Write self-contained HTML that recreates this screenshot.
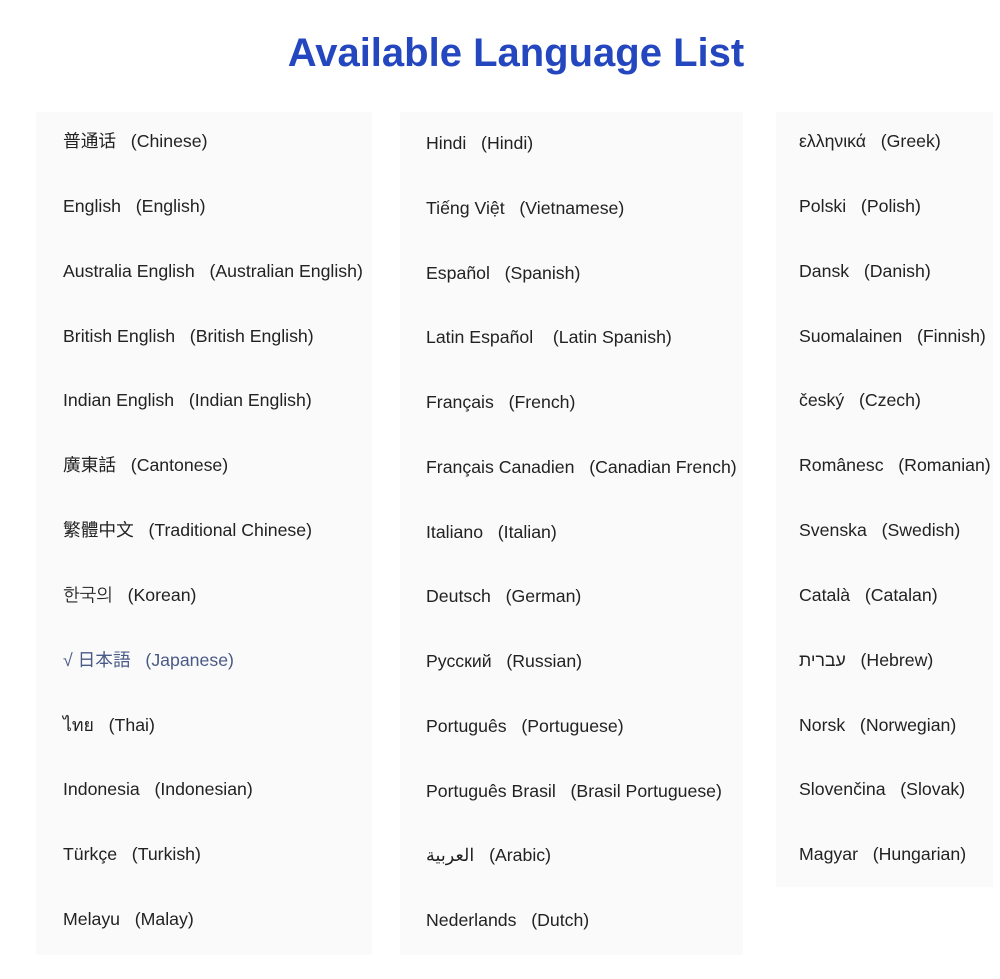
<!DOCTYPE html>
<html><head><meta charset="utf-8"><style>
body{margin:0;width:1000px;height:979px;background:#fff;position:relative;overflow:hidden;font-family:"Liberation Sans","Noto Sans CJK SC",sans-serif;}
h1{position:absolute;top:28px;left:0;width:1032px;text-align:center;margin:0;font-size:40px;font-weight:bold;color:#2447c0;line-height:50px;}
.p{position:absolute;background:#fafafa;}
.r{position:absolute;font-size:17.7px;color:#222;white-space:pre;line-height:22px;}
.sel{color:#4a5a86;}
</style></head><body>
<h1>Available Language List</h1>
<div class="p" style="left:36px;top:112px;width:336px;height:843px"></div>
<div class="p" style="left:400px;top:112px;width:343px;height:843px"></div>
<div class="p" style="left:776px;top:112px;width:217px;height:775px"></div>

<div class="r" style="left:63px;top:130px">普通话   (Chinese)</div>
<div class="r" style="left:63px;top:195px">English   (English)</div>
<div class="r" style="left:63px;top:260px">Australia English   (Australian English)</div>
<div class="r" style="left:63px;top:325px">British English   (British English)</div>
<div class="r" style="left:63px;top:389px">Indian English   (Indian English)</div>
<div class="r" style="left:63px;top:454px">廣東話   (Cantonese)</div>
<div class="r" style="left:63px;top:519px">繁體中文   (Traditional Chinese)</div>
<div class="r" style="left:63px;top:584px;font-family:'Liberation Sans','NanumGothic',sans-serif">한국의   (Korean)</div>
<div class="r sel" style="left:63px;top:649px;font-family:'Liberation Sans','Noto Sans CJK JP',sans-serif">√ 日本語   (Japanese)</div>
<div class="r" style="left:63px;top:714px">ไทย   (Thai)</div>
<div class="r" style="left:63px;top:778px">Indonesia   (Indonesian)</div>
<div class="r" style="left:63px;top:843px">Türkçe   (Turkish)</div>
<div class="r" style="left:63px;top:908px">Melayu   (Malay)</div>

<div class="r" style="left:426px;top:132px">Hindi   (Hindi)</div>
<div class="r" style="left:426px;top:197px">Tiếng Việt   (Vietnamese)</div>
<div class="r" style="left:426px;top:262px">Español   (Spanish)</div>
<div class="r" style="left:426px;top:326px">Latin Español    (Latin Spanish)</div>
<div class="r" style="left:426px;top:391px">Français   (French)</div>
<div class="r" style="left:426px;top:456px">Français Canadien   (Canadian French)</div>
<div class="r" style="left:426px;top:521px">Italiano   (Italian)</div>
<div class="r" style="left:426px;top:585px">Deutsch   (German)</div>
<div class="r" style="left:426px;top:650px">Русский   (Russian)</div>
<div class="r" style="left:426px;top:715px">Português   (Portuguese)</div>
<div class="r" style="left:426px;top:780px">Português Brasil   (Brasil Portuguese)</div>
<div class="r" style="left:426px;top:844px">العربية   (Arabic)</div>
<div class="r" style="left:426px;top:909px">Nederlands   (Dutch)</div>

<div class="r" style="left:799px;top:130px">ελληνικά   (Greek)</div>
<div class="r" style="left:799px;top:195px">Polski   (Polish)</div>
<div class="r" style="left:799px;top:260px">Dansk   (Danish)</div>
<div class="r" style="left:799px;top:325px">Suomalainen   (Finnish)</div>
<div class="r" style="left:799px;top:389px">český   (Czech)</div>
<div class="r" style="left:799px;top:454px">Românesc   (Romanian)</div>
<div class="r" style="left:799px;top:519px">Svenska   (Swedish)</div>
<div class="r" style="left:799px;top:584px">Català   (Catalan)</div>
<div class="r" style="left:799px;top:649px">עברית   (Hebrew)</div>
<div class="r" style="left:799px;top:714px">Norsk   (Norwegian)</div>
<div class="r" style="left:799px;top:778px">Slovenčina   (Slovak)</div>
<div class="r" style="left:799px;top:843px">Magyar   (Hungarian)</div>
</body></html>
